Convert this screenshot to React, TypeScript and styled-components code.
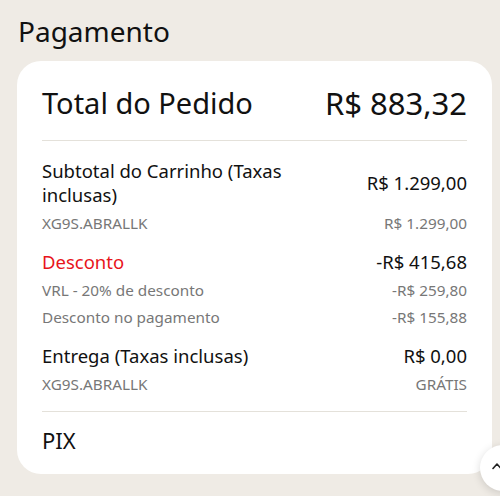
import { createGlobalStyle, styled } from 'styled-components';

const GlobalStyle = createGlobalStyle`
  html, body {
    margin: 0;
    padding: 0;
    background: #efebe5;
    font-family: 'Noto Sans', 'Liberation Sans', sans-serif;
    color: #111111;
  }
`;

interface SubLine {
  label: string;
  value: string;
}

interface Section {
  label: string;
  value: string;
  danger?: boolean;
  lines: SubLine[];
}

const sections: Section[] = [
  {
    label: 'Subtotal do Carrinho (Taxas inclusas)',
    value: 'R$ 1.299,00',
    lines: [{ label: 'XG9S.ABRALLK', value: 'R$ 1.299,00' }],
  },
  {
    label: 'Desconto',
    value: '-R$ 415,68',
    danger: true,
    lines: [
      { label: 'VRL - 20% de desconto', value: '-R$ 259,80' },
      { label: 'Desconto no pagamento', value: '-R$ 155,88' },
    ],
  },
  {
    label: 'Entrega (Taxas inclusas)',
    value: 'R$ 0,00',
    lines: [{ label: 'XG9S.ABRALLK', value: 'GRÁTIS' }],
  },
];

function App() {
  return (
    <Page>
      <GlobalStyle />
      <Title>Pagamento</Title>
      <Card>
        <TotalRow>
          <span>Total do Pedido</span>
          <TotalValue>R$ 883,32</TotalValue>
        </TotalRow>
        <Details>
          {sections.map(section => (
            <Block key={section.label}>
              <MainRow>
                <MainLabel $danger={section.danger}>{section.label}</MainLabel>
                <MainValue>{section.value}</MainValue>
              </MainRow>
              {section.lines.map(line => (
                <SubRow key={line.label}>
                  <span>{line.label}</span>
                  <span>{line.value}</span>
                </SubRow>
              ))}
            </Block>
          ))}
        </Details>
        <Method>PIX</Method>
      </Card>
      <TopButton aria-label='Voltar ao topo'>
        <svg width='14' height='14' viewBox='0 0 14 14' fill='none'>
          <path d='M3 9.5 L7 5 L11 9.5' stroke='#222' strokeWidth='1.6' strokeLinecap='round' strokeLinejoin='round' />
        </svg>
      </TopButton>
    </Page>
  );
}

const Page = styled.div`
  position: relative;
  width: 500px;
  height: 496px;
  overflow: hidden;
  padding: 14px 8px 0 17px;
  box-sizing: border-box;
`;

const Title = styled.h1`
  margin: 0 0 12px 1px;
  font-size: 28px;
  font-weight: 400;
  line-height: 35px;
`;

const Card = styled.div`
  background: #ffffff;
  border-radius: 24px;
  width: 475px;
  padding: 22px 25px 19px;
  box-sizing: border-box;
`;

const TotalRow = styled.div`
  display: flex;
  justify-content: space-between;
  align-items: center;
  font-size: 29px;
  line-height: 40px;
  padding-bottom: 17px;
  border-bottom: 1px solid #e4e1da;
`;

const TotalValue = styled.span`
  font-size: 31px;
`;

const Details = styled.div`
  display: flex;
  flex-direction: column;
  gap: 16px;
  padding: 18px 0 16px;
  border-bottom: 1px solid #e4e1da;
`;

const Block = styled.div`
  display: flex;
  flex-direction: column;
  gap: 5px;
`;

const MainRow = styled.div`
  display: flex;
  justify-content: space-between;
  align-items: center;
  gap: 24px;
  font-size: 18.5px;
  line-height: 24px;
`;

const MainLabel = styled.span<{ $danger?: boolean }>`
  max-width: 260px;
  color: ${p => (p.$danger ? '#e8141b' : '#111111')};
`;

const MainValue = styled.span`
  white-space: nowrap;
`;

const SubRow = styled.div`
  display: flex;
  justify-content: space-between;
  font-size: 15.3px;
  line-height: 22px;
  color: #777777;
`;

const Method = styled.div`
  font-size: 22px;
  line-height: 30px;
  padding-top: 13px;
`;

const TopButton = styled.button`
  position: absolute;
  left: 480px;
  top: 445px;
  width: 46px;
  height: 46px;
  border-radius: 50%;
  border: none;
  background: #ffffff;
  box-shadow: 0 2px 8px rgba(0, 0, 0, 0.15);
  padding: 0 0 4px 10px;
  display: flex;
  align-items: center;
  justify-content: flex-start;
  cursor: pointer;
`;

export default App;
